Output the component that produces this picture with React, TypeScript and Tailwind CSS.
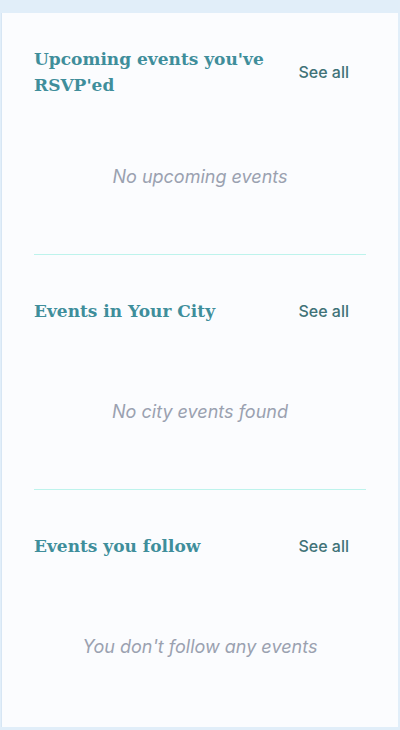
import React from "react";

const sections = [
  { title: "Upcoming events you've RSVP'ed", empty: "No upcoming events" },
  { title: "Events in Your City", empty: "No city events found" },
  { title: "Events you follow", empty: "You don't follow any events" },
];

const App = () => {
  return (
    <div className="min-h-[730px] w-[400px] bg-[#e1eef9] pt-[13px] pb-[3px]">
      <div className="ml-px mr-[2px] min-h-[714px] border-l border-[#d7e6f4] bg-[#fbfcfe] px-[32px]">
        {sections.map((s, i) => (
          <div key={s.title}>
            {i > 0 && <div className="h-px bg-[#bdf3ec]" />}
            <div
              className={
                "flex min-h-[44px] items-center justify-between box-content " +
                (i === 0 ? "pt-[33px]" : "pt-[34px]")
              }
            >
              <h2 className="w-[250px] font-['DejaVu_Serif',serif] text-[17px] font-bold leading-[26px] text-[#3f8e9b]">
                {s.title}
              </h2>
              <button className="mr-[17px] font-['Inter',sans-serif] text-[16px] font-medium text-[#3f7277]">
                See all
              </button>
            </div>
            <div className="pt-[67px] pb-[65px] text-center font-['Inter',sans-serif] text-[18px] italic leading-[24px] text-[#9aa1b0]">
              {s.empty}
            </div>
          </div>
        ))}
      </div>
    </div>
  );
};

export default App;
